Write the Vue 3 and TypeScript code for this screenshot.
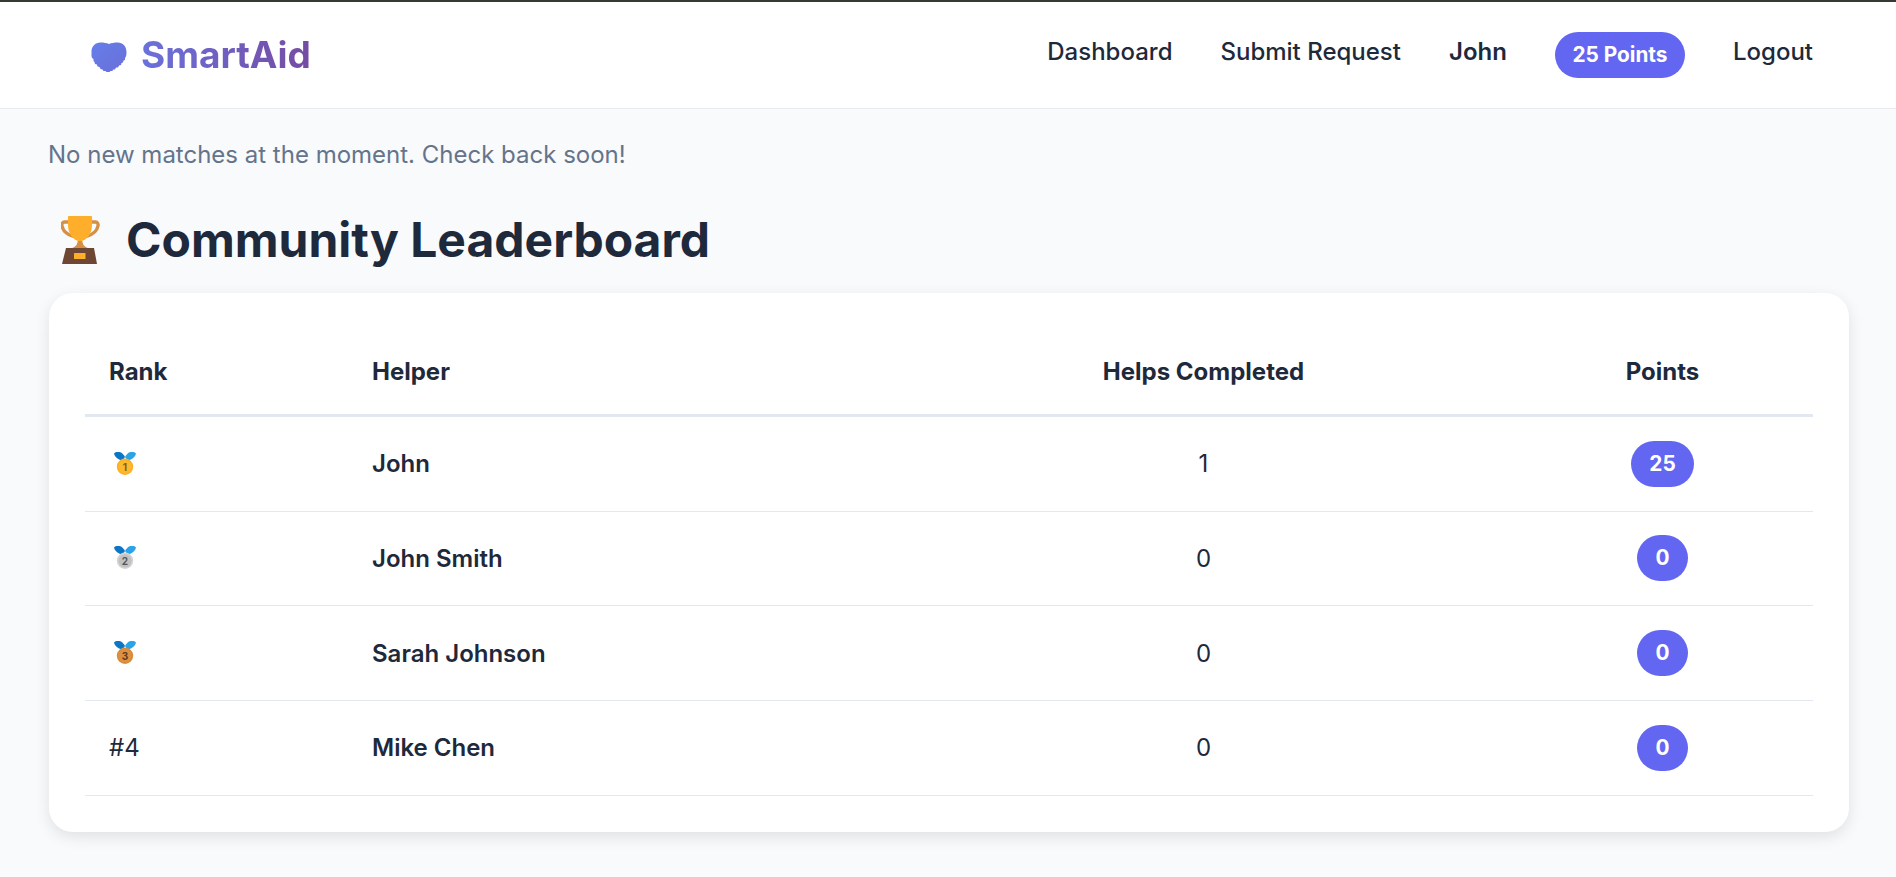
<script setup lang="ts">
interface Row { rank: number; name: string; helps: number; points: number }
const rows: Row[] = [
  { rank: 1, name: 'John', helps: 1, points: 25 },
  { rank: 2, name: 'John Smith', helps: 0, points: 0 },
  { rank: 3, name: 'Sarah Johnson', helps: 0, points: 0 },
  { rank: 4, name: 'Mike Chen', helps: 0, points: 0 },
]
const medalFill: Record<number, string> = { 1: '#fdb92e', 2: '#bfc1c3', 3: '#dd9140' }
const medalRing: Record<number, string> = { 1: '#fcae24', 2: '#d2d3d5', 3: '#d98b3c' }
const medalText: Record<number, string> = { 1: '#8a5a1c', 2: '#56595c', 3: '#5c3a20' }
</script>

<template>
  <div class="page">
    <nav class="nav">
      <div class="brand">
        <svg class="heart" viewBox="0 0 36 30" width="36" height="30">
          <defs>
            <linearGradient id="hg" x1="0" y1="0" x2="1" y2="1">
              <stop offset="0" stop-color="#667eea" />
              <stop offset="1" stop-color="#6a6fd8" />
            </linearGradient>
          </defs>
          <path fill="url(#hg)" d="M9.500 0.500C13 0.500 15.500 1 18 2C20.500 1 23 0.500 26.500 0.500C32 0.500 35.500 4.500 35.500 10C35.500 13 35 15 34 16L34 18L32.500 18.500L32 20.500L30.500 21L30 23L28 23.500L27 25.500L25 25.500L24 27.500L22 27.500L21.500 29L19.500 29L18.500 30L15.500 30L14.500 29L12.500 29L11.500 27.500L9.500 27L8.500 25L6.500 24.500L6 22.500L4 22L3.500 20L2.500 19L2.500 17L1 16L0.500 14L0.500 9.500C0.500 4.500 4 0.500 9.500 0.500Z" />
        </svg>
        <span class="brand-text">SmartAid</span>
      </div>
      <ul class="links">
        <li class="up">Dashboard</li>
        <li class="up">Submit Request</li>
        <li class="up user">John</li>
        <li class="pill">25 Points</li>
        <li class="up">Logout</li>
      </ul>
    </nav>

    <main class="main">
      <p class="note">No new matches at the moment. Check back soon!</p>
      <h1 class="title">
        <svg class="trophy" viewBox="0 0 40 48" width="40" height="48">
          <path d="M8 6H3.500C1.500 6 0.500 8 1 10C2 14.500 6 18.500 12 20" fill="none" stroke="#d68f44" stroke-width="3.400" stroke-linecap="round" />
          <path d="M30 6H34.500C36.500 6 37.500 8 37 10C36 14.500 32 18.500 26 20" fill="none" stroke="#d68f44" stroke-width="3.400" stroke-linecap="round" />
          <path d="M17 24H21L22 28C23 30 25 31.500 27 32H11C13 31.500 15 30 16 28Z" fill="#d68f44" />
          <path d="M8 0H30C30.600 0 31 0.400 31 1V9.500C31 17 26 25 19 25C12 25 7 17 7 9.500V1C7 0.400 7.400 0 8 0Z" fill="#ffae2c" />
          <path d="M5 32H33L36 48H1Z" fill="#6d4733" />
          <rect x="13" y="37" width="11.500" height="6" rx="0.500" fill="#ffae2c" />
        </svg>
        <span>Community Leaderboard</span>
      </h1>

      <section class="card">
        <table class="table">
          <colgroup>
            <col class="c1" /><col class="c2" /><col class="c3" /><col class="c4" />
          </colgroup>
          <thead>
            <tr>
              <th>Rank</th>
              <th>Helper</th>
              <th class="center">Helps Completed</th>
              <th class="center">Points</th>
            </tr>
          </thead>
          <tbody>
            <tr v-for="r in rows" :key="r.rank">
              <td class="rank">
                <svg v-if="r.rank <= 3" class="medal" viewBox="0 1 22 24" width="22" height="24">
                  <path d="M0 2.500C1.500 0.500 5 0.500 7 1.500C8.500 2.500 10 4 11 6L8.500 9.500C4.500 9 1 6.500 0 2.500Z" fill="#0b76c5" />
                  <path d="M22 2.500C20.500 0.500 17 0.500 15 1.500C13.500 2.500 12 4 11 6L13.500 9.500C17.500 9 21 6.500 22 2.500Z" fill="#2aa4e8" />
                  <circle cx="11" cy="15.800" r="8.200" :fill="medalRing[r.rank]" />
                  <circle cx="11" cy="15.800" r="6.600" :fill="medalFill[r.rank]" />
                  <text x="11" y="19.500" text-anchor="middle" class="medal-num" :fill="medalText[r.rank]">{{ r.rank }}</text>
                </svg>
                <span v-else>#{{ r.rank }}</span>
              </td>
              <td class="name">{{ r.name }}</td>
              <td class="center">{{ r.helps }}</td>
              <td class="center"><span class="badge">{{ r.points }}</span></td>
            </tr>
          </tbody>
        </table>
      </section>
    </main>
  </div>
</template>

<style>
html, body { margin: 0; background: #f8fafc; }
</style>

<style scoped>
.page {
  min-height: 877px;
  background: #f8fafc;
  font-family: Inter, "Noto Sans", sans-serif;
  color: #1e293b;
}
.nav {
  height: 106px;
  box-sizing: content-box;
  border-top: 2px solid #333b33;
  border-bottom: 1px solid #e8ecf1;
  background: #fff;
  display: flex;
  align-items: center;
  justify-content: space-between;
  padding: 0 83px 0 91px;
}
.brand { display: flex; align-items: center; gap: 14px; }
.heart { display: block; margin-top: 3px; }
.brand-text {
  font-size: 37px;
  font-weight: 700;
  margin-top: -2px;
  background: linear-gradient(90deg, #6a72dc, #764ba2);
  -webkit-background-clip: text;
  background-clip: text;
  color: transparent;
}
.links {
  display: flex;
  align-items: center;
  gap: 48px;
  margin: 0;
  padding: 0;
  list-style: none;
  font-size: 24px;
  font-weight: 500;
}
.links .up { padding-bottom: 7px; }
.links .user { font-weight: 600; }
.pill {
  background: #6366f1;
  color: #fff;
  border-radius: 24px;
  padding: 0 17.500px;
  height: 46px;
  line-height: 46px;
  font-size: 20.800px;
  font-weight: 700;
}
.main { padding: 28px 47px 0 49px; }
.note {
  margin: 0;
  margin-left: -1px;
  font-size: 24px;
  line-height: 36px;
  color: #64748b;
}
.title {
  display: flex;
  align-items: center;
  gap: 25px;
  margin: 33px 0 0;
  padding-left: 12px;
  font-size: 48px;
  font-weight: 700;
  line-height: 68px;
  color: #1e293b;
}
.trophy { display: block; }
.card {
  margin-top: 19px;
  box-sizing: border-box;
  width: 1800px;
  background: #fff;
  border-radius: 24px;
  padding: 36px;
  box-shadow: 0 5px 15px rgba(0, 0, 0, 0.1);
}
.table { width: 1728px; table-layout: fixed; border-collapse: collapse; font-size: 24px; }
.c1 { width: 263px; }
.c2 { width: 547px; }
.c3 { width: 617px; }
.c4 { width: 301px; }
th {
  text-align: left;
  font-weight: 700;
  padding: 0 24px;
  height: 85px;
  border-bottom: 3px solid #e2e8f0;
}
td {
  height: 93.670px;
  padding: 0 24px;
  border-bottom: 1px solid #e2e8f0;
}
.center { text-align: center; }
.name { font-weight: 600; }
.medal { display: block; margin-left: 5px; }
.medal-num { font-size: 10px; font-weight: 700; font-family: Inter, sans-serif; }
.badge {
  display: inline-block;
  height: 46px;
  line-height: 46px;
  padding: 0 18px;
  border-radius: 24px;
  background: #6366f1;
  color: #fff;
  font-size: 20.800px;
  font-weight: 700;
  text-align: center;
}
</style>
